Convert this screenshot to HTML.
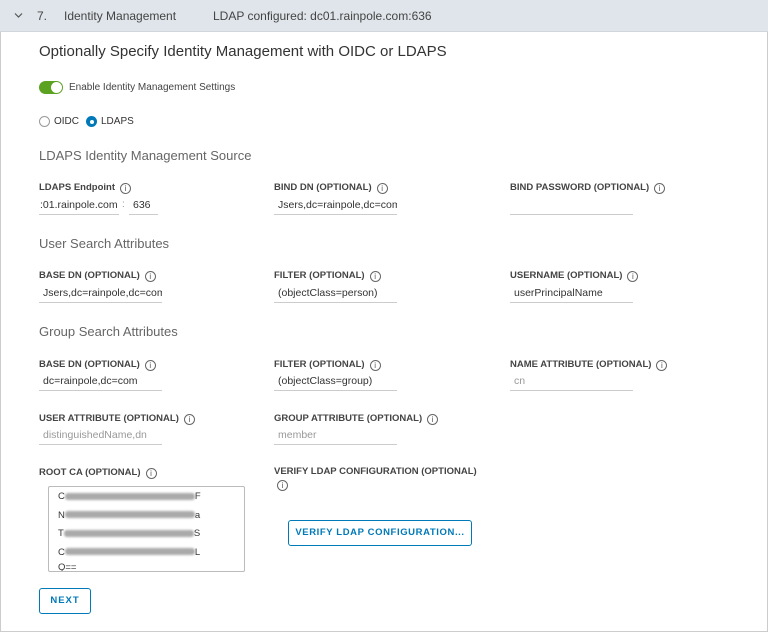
<!DOCTYPE html>
<html><head><style>
*{margin:0;padding:0;box-sizing:border-box}
body{width:768px;height:632px;background:#fff;font-family:"Liberation Sans",sans-serif;color:#333;position:relative;overflow:hidden}
.frame{position:absolute;left:0;top:0;width:768px;height:632px;border:1px solid #ccc;border-top:none}
.hdr{position:absolute;left:0;top:0;width:768px;height:32px;background:#dfe5ea;border-bottom:1px solid #cfd6dc;font-size:12px;color:#444}
.a{position:absolute;white-space:nowrap}
.lbl{font-size:9.5px;font-weight:bold;color:#444;letter-spacing:0}
.sec{font-size:13px;color:#666}
.inp{position:absolute;height:17px;border-bottom:1px solid #ccc;font-size:10.5px;color:#333;padding-left:4px;line-height:14px;white-space:nowrap;overflow:hidden}
.ph{color:#999}
.i{display:inline-block;width:11px;height:11px;border:1px solid #666;border-radius:50%;font-size:8px;line-height:9px;text-align:center;font-weight:normal;margin-left:5px;vertical-align:-1px;color:#555}
.blur{display:inline-block;width:130px;height:7px;background:#aaa;border-radius:3px;vertical-align:middle;filter:blur(1px)}
.btn{position:absolute;border:1px solid #0079b8;border-radius:3px;color:#0079b8;font-size:9.5px;font-weight:bold;letter-spacing:1px;text-align:center;white-space:nowrap}
</style></head><body>
<div class="frame"></div>
<div class="hdr">
<svg class="a" style="left:14px;top:12px" width="9" height="7"><path d="M1 1.5 L4.5 5 L8 1.5" stroke="#555" stroke-width="1.2" fill="none"/></svg>
<span class="a" style="left:37px;top:9px">7.</span>
<span class="a" style="left:64px;top:9px">Identity Management</span>
<span class="a" style="left:213px;top:9px">LDAP configured: dc01.rainpole.com:636</span>
</div>
<div class="a" style="left:39px;top:43px;font-size:15px;color:#333">Optionally Specify Identity Management with OIDC or LDAPS</div>
<div class="a" style="left:39px;top:81px;width:24px;height:13px;border-radius:7px;background:#5aa220"><div style="position:absolute;right:1px;top:1px;width:11px;height:11px;border-radius:50%;background:#fff"></div></div>
<span class="a" style="left:69px;top:82px;font-size:10px;color:#444">Enable Identity Management Settings</span>
<div class="a" style="left:39px;top:116px;width:11px;height:11px;border:1px solid #999;border-radius:50%"></div>
<span class="a" style="left:54px;top:116px;font-size:10px">OIDC</span>
<div class="a" style="left:86px;top:116px;width:11px;height:11px;border-radius:50%;background:#0079b8"><div style="position:absolute;left:3.5px;top:3.5px;width:4px;height:4px;border-radius:50%;background:#fff"></div></div>
<span class="a" style="left:101px;top:116px;font-size:10px">LDAPS</span>
<div class="a sec" style="left:39px;top:148px">LDAPS Identity Management Source</div>
<div class="a lbl" style="left:39px;top:182px">LDAPS Endpoint<span class="i">i</span></div>
<div class="a lbl" style="left:274px;top:182px">BIND DN (OPTIONAL)<span class="i">i</span></div>
<div class="a lbl" style="left:510px;top:182px">BIND PASSWORD (OPTIONAL)<span class="i">i</span></div>
<div class="inp" style="left:39px;top:198px;width:80px;padding-left:1px">:01.rainpole.com</div>
<span class="a" style="left:122px;top:199px;font-size:10px;color:#999">:</span>
<div class="inp" style="left:129px;top:198px;width:29px">636</div>
<div class="inp" style="left:274px;top:198px;width:123px">Jsers,dc=rainpole,dc=com</div>
<div class="inp" style="left:510px;top:198px;width:123px"></div>
<div class="a sec" style="left:39px;top:236px">User Search Attributes</div>
<div class="a lbl" style="left:39px;top:270px">BASE DN (OPTIONAL)<span class="i">i</span></div>
<div class="a lbl" style="left:274px;top:270px">FILTER (OPTIONAL)<span class="i">i</span></div>
<div class="a lbl" style="left:510px;top:270px">USERNAME (OPTIONAL)<span class="i">i</span></div>
<div class="inp" style="left:39px;top:286px;width:123px">Jsers,dc=rainpole,dc=com</div>
<div class="inp" style="left:274px;top:286px;width:123px">(objectClass=person)</div>
<div class="inp" style="left:510px;top:286px;width:123px">userPrincipalName</div>
<div class="a sec" style="left:39px;top:324px">Group Search Attributes</div>
<div class="a lbl" style="left:39px;top:359px">BASE DN (OPTIONAL)<span class="i">i</span></div>
<div class="a lbl" style="left:274px;top:359px">FILTER (OPTIONAL)<span class="i">i</span></div>
<div class="a lbl" style="left:510px;top:359px">NAME ATTRIBUTE (OPTIONAL)<span class="i">i</span></div>
<div class="inp" style="left:39px;top:374px;width:123px">dc=rainpole,dc=com</div>
<div class="inp" style="left:274px;top:374px;width:123px">(objectClass=group)</div>
<div class="inp ph" style="left:510px;top:374px;width:123px">cn</div>
<div class="a lbl" style="left:39px;top:413px">USER ATTRIBUTE (OPTIONAL)<span class="i">i</span></div>
<div class="a lbl" style="left:274px;top:413px">GROUP ATTRIBUTE (OPTIONAL)<span class="i">i</span></div>
<div class="inp ph" style="left:39px;top:428px;width:123px">distinguishedName,dn</div>
<div class="inp ph" style="left:274px;top:428px;width:123px">member</div>
<div class="a lbl" style="left:39px;top:467px">ROOT CA (OPTIONAL)<span class="i">i</span></div>
<div class="a lbl" style="left:274px;top:466px">VERIFY LDAP CONFIGURATION (OPTIONAL)</div>
<span class="a i" style="left:272px;top:480px">i</span>
<div class="a" style="left:48px;top:486px;width:197px;height:86px;border:1px solid #bbb;border-radius:2px;font-size:9.5px;line-height:18.5px;padding:1px 0 0 9px;overflow:hidden">
<div>C<span class="blur"></span>F</div><div>N<span class="blur"></span>a</div><div>T<span class="blur"></span>S</div><div>C<span class="blur"></span>L</div><div style="line-height:12px">Q==</div>
</div>
<div class="btn" style="left:288px;top:520px;width:184px;height:26px;line-height:24px;letter-spacing:.6px">VERIFY LDAP CONFIGURATION...</div>
<div class="btn" style="left:39px;top:588px;width:52px;height:26px;line-height:24px">NEXT</div>
</body></html>
